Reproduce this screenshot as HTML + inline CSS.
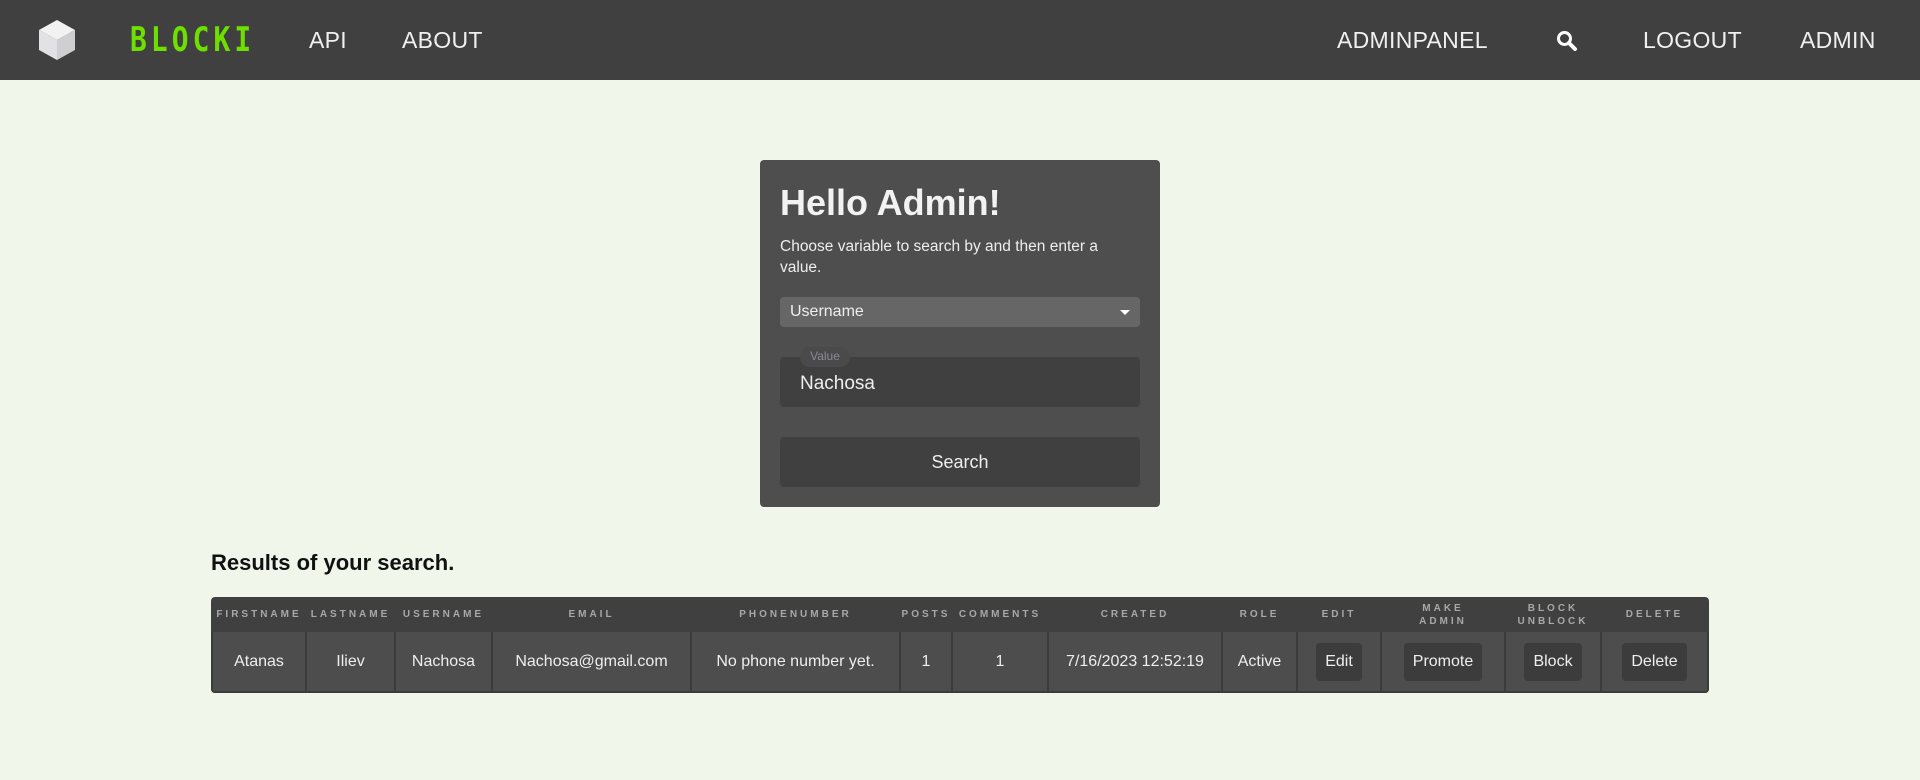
<!DOCTYPE html>
<html><head><meta charset="utf-8"><style>
*{box-sizing:border-box;margin:0;padding:0}
body{width:1920px;height:780px;background:#f1f6eb;font-family:"Liberation Sans","DejaVu Sans",sans-serif;position:relative;overflow:hidden}
.nav{position:absolute;left:0;top:0;width:1920px;height:80px;background:#404040;color:#f0f0f0}
.nav .t{position:absolute;top:26px;font-size:23px;line-height:28px;letter-spacing:0.3px}
.card{position:absolute;left:760px;top:160px;width:400px;height:347px;background:#4e4e4e;border-radius:4px;color:#eee}
h1{position:absolute;left:20px;top:22px;font-size:36px;font-weight:bold;color:#f2f2f2}
.p{position:absolute;left:20px;top:76px;width:350px;font-size:15.5px;line-height:21px;color:#eee}
.sel{position:absolute;left:20px;top:137px;width:360px;height:30px;background:#666;border-radius:4px;font-size:16px;line-height:30px;padding-left:10px}
.sel:after{content:"";position:absolute;right:10px;top:13px;border:5px solid transparent;border-top:5px solid #fff;border-bottom:0}
.inp{position:absolute;left:20px;top:197px;width:360px;height:50px;background:#404040;border-radius:4px;font-size:19px;line-height:50px;padding-left:20px;padding-top:2px}
.lbl{position:absolute;left:40px;top:187px;width:50px;height:20px;background:#4a4a4a;border-radius:10px;color:#8a8a99;font-size:12px;line-height:18px;text-align:center}
.btn{position:absolute;left:20px;top:277px;width:360px;height:50px;background:#404040;border-radius:4px;font-size:18px;line-height:50px;text-align:center}
.res{position:absolute;left:211px;top:550px;font-size:22px;font-weight:bold;color:#111}
table{position:absolute;left:211px;top:597px;width:1498px;height:96px;border-collapse:collapse;background:#404040;border-radius:4px;overflow:hidden;color:#eee}
th{height:35px;font-size:10px;letter-spacing:3px;color:#a8a8a8;font-weight:bold;text-align:center;line-height:13px;padding:0}
td{background:#4d4d4d;border:2px solid #3b3b3b;border-top:0;font-size:16px;text-align:center;padding:0}
td b{display:inline-block;font-weight:normal;background:#3c3c3c;border-radius:4px;padding:10px 9px}
</style></head><body>
<div class="nav">
<svg style="position:absolute;left:38px;top:20px" width="38" height="40" viewBox="0 0 38 40"><polygon points="19,0 37,10 19,20 1,10" fill="#f2f2f2"/><polygon points="1,10 19,20 19,40 1,30" fill="#e2e2e4"/><polygon points="37,10 19,20 19,40 37,30" fill="#cfcfd2"/></svg>
<div class="t" style="left:130px;top:20px;font-size:34px;font-weight:bold;color:#6ee000;letter-spacing:5px;font-family:'DejaVu Sans Mono',monospace;line-height:40px;transform:scaleX(0.82);transform-origin:left">BLOCKI</div>
<div class="t" style="left:309px">API</div>
<div class="t" style="left:402px">ABOUT</div>
<div class="t" style="left:1337px">ADMINPANEL</div>
<svg style="position:absolute;left:1556px;top:30px" width="22" height="22" viewBox="0 0 22 22"><circle cx="8.5" cy="8.5" r="6" stroke="#fff" stroke-width="3" fill="none"/><line x1="13" y1="13" x2="19" y2="19" stroke="#fff" stroke-width="4" stroke-linecap="round"/></svg>
<div class="t" style="left:1643px">LOGOUT</div>
<div class="t" style="left:1800px">ADMIN</div>
</div>
<div class="card">
<h1>Hello Admin!</h1>
<div class="p">Choose variable to search by and then enter a value.</div>
<div class="sel">Username</div>
<div class="inp">Nachosa</div>
<div class="lbl">Value</div>
<div class="btn">Search</div>
</div>
<div class="res">Results of your search.</div>
<table>
<tr><th style="width:94px">FIRSTNAME</th><th style="width:89px">LASTNAME</th><th style="width:97px">USERNAME</th><th style="width:199px">EMAIL</th><th style="width:209px">PHONENUMBER</th><th style="width:52px">POSTS</th><th style="width:96px">COMMENTS</th><th style="width:174px">CREATED</th><th style="width:75px">ROLE</th><th style="width:84px">EDIT</th><th style="width:124px">MAKE<br>ADMIN</th><th style="width:96px">BLOCK<br>UNBLOCK</th><th>DELETE</th></tr>
<tr><td>Atanas</td><td>Iliev</td><td>Nachosa</td><td>Nachosa@gmail.com</td><td>No phone number yet.</td><td>1</td><td>1</td><td>7/16/2023 12:52:19</td><td>Active</td><td><b>Edit</b></td><td><b>Promote</b></td><td><b>Block</b></td><td><b>Delete</b></td></tr>
</table>
</body></html>
